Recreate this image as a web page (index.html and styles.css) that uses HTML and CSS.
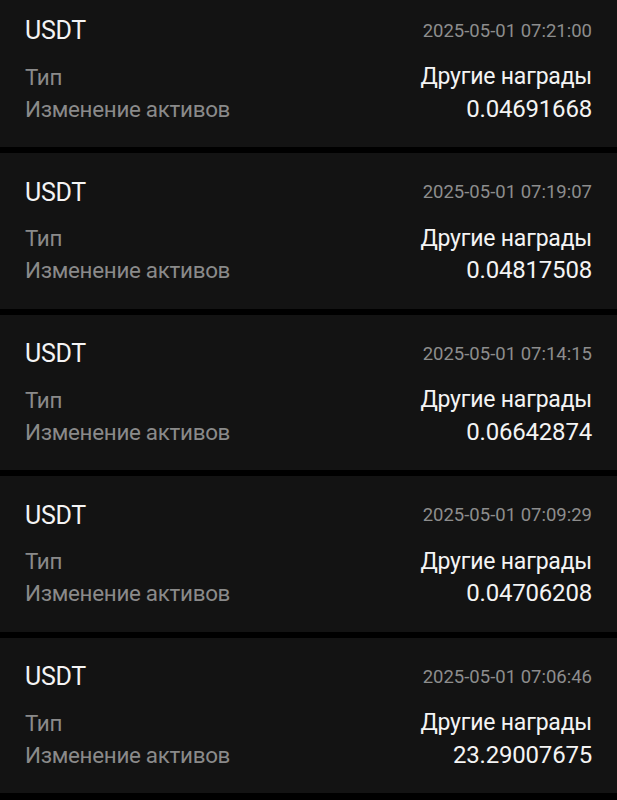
FILE: index.html
```html
<!DOCTYPE html>
<html lang="ru">
<head>
  <meta charset="UTF-8">
  <title>История активов</title>
  <link rel="stylesheet" href="styles.css">
</head>
<body>
  <div class="list">
    <div class="record">
      <div class="record-head">
        <span class="coin">USDT</span>
        <span class="time">2025-05-01 07:21:00</span>
      </div>
      <div class="row">
        <span class="label">Тип</span>
        <span class="value">Другие награды</span>
      </div>
      <div class="row">
        <span class="label">Изменение активов</span>
        <span class="value amount">0.04691668</span>
      </div>
    </div>

    <div class="record">
      <div class="record-head">
        <span class="coin">USDT</span>
        <span class="time">2025-05-01 07:19:07</span>
      </div>
      <div class="row">
        <span class="label">Тип</span>
        <span class="value">Другие награды</span>
      </div>
      <div class="row">
        <span class="label">Изменение активов</span>
        <span class="value amount">0.04817508</span>
      </div>
    </div>

    <div class="record">
      <div class="record-head">
        <span class="coin">USDT</span>
        <span class="time">2025-05-01 07:14:15</span>
      </div>
      <div class="row">
        <span class="label">Тип</span>
        <span class="value">Другие награды</span>
      </div>
      <div class="row">
        <span class="label">Изменение активов</span>
        <span class="value amount">0.06642874</span>
      </div>
    </div>

    <div class="record">
      <div class="record-head">
        <span class="coin">USDT</span>
        <span class="time">2025-05-01 07:09:29</span>
      </div>
      <div class="row">
        <span class="label">Тип</span>
        <span class="value">Другие награды</span>
      </div>
      <div class="row">
        <span class="label">Изменение активов</span>
        <span class="value amount">0.04706208</span>
      </div>
    </div>

    <div class="record">
      <div class="record-head">
        <span class="coin">USDT</span>
        <span class="time">2025-05-01 07:06:46</span>
      </div>
      <div class="row">
        <span class="label">Тип</span>
        <span class="value">Другие награды</span>
      </div>
      <div class="row">
        <span class="label">Изменение активов</span>
        <span class="value amount">23.29007675</span>
      </div>
    </div>
  </div>
</body>
</html>
```

FILE: styles.css
```css
body {
  margin: 0;
  background-color: #000;
  font-family: Roboto, "Liberation Sans", sans-serif;
  color: #f4f4f4;
}

.list {
  display: flex;
  flex-direction: column;
  gap: 6px;
  margin-top: -8.5px;
}

.record {
  background-color: #131313;
  padding: 24px 25px 22.5px;
}

.record-head {
  display: flex;
  justify-content: space-between;
  align-items: center;
  height: 30px;
  margin-bottom: 15px;
}

.coin {
  font-size: 25px;
  letter-spacing: -0.3px;
}

.time {
  font-size: 18.5px;
  color: #8d8d8d;
}

.row {
  display: flex;
  justify-content: space-between;
  align-items: center;
  height: 32px;
}

.label {
  font-size: 22.4px;
  color: #8a8a8a;
  letter-spacing: -0.3px;
}

.value {
  font-size: 23px;
  letter-spacing: -0.2px;
}

.amount {
  font-size: 24px;
}
```
